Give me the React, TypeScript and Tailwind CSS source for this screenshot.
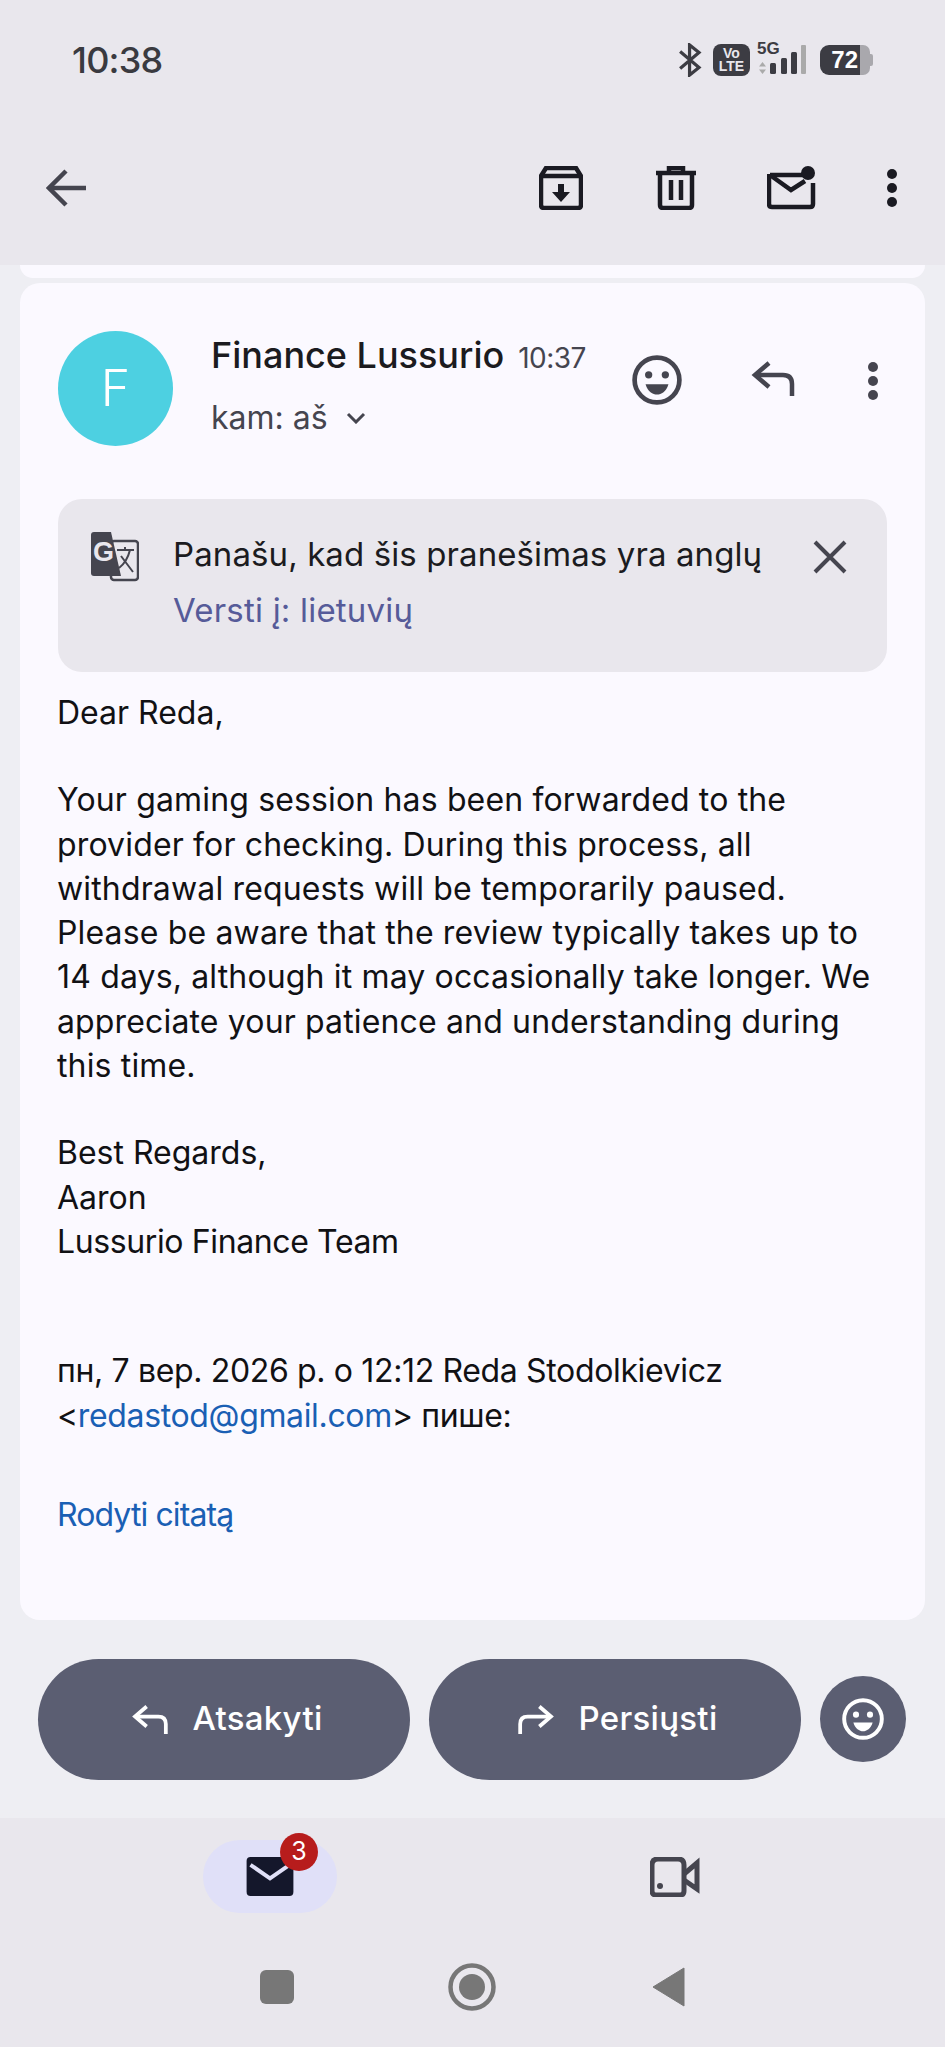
const font = "font-['Inter',sans-serif]";

const Dots = ({ className = "" }: { className?: string }) => (
  <svg viewBox="0 0 12 40" className={className} fill="currentColor">
    <circle cx="6" cy="6" r="5" />
    <circle cx="6" cy="20" r="5" />
    <circle cx="6" cy="34" r="5" />
  </svg>
);

const Reply = ({ className = "" }: { className?: string }) => (
  <svg viewBox="0 0 44 36" className={className} fill="none" stroke="currentColor" strokeWidth="4.5">
    <path d="M18 3 L4 15 L18 27" />
    <path d="M4 15 H32 Q41 15 41 24 V36" />
  </svg>
);

const Forward = ({ className = "" }: { className?: string }) => (
  <svg viewBox="0 0 44 36" className={className} fill="none" stroke="currentColor" strokeWidth="4.5">
    <path d="M26 3 L40 15 L26 27" />
    <path d="M40 15 H12 Q3 15 3 24 V36" />
  </svg>
);

const Smile = ({ className = "" }: { className?: string }) => (
  <svg viewBox="0 0 48 48" className={className}>
    <circle cx="24" cy="24" r="21.5" fill="none" stroke="currentColor" strokeWidth="4.5" />
    <circle cx="16" cy="19" r="3.5" fill="currentColor" />
    <circle cx="32" cy="19" r="3.5" fill="currentColor" />
    <path d="M13 28 H35 C33 35 28 38 24 38 C20 38 15 35 13 28 Z" fill="currentColor" />
  </svg>
);

const StatusIcons = () => (
  <div className="flex items-center h-[44px] text-[#3c3c43]">
    <svg viewBox="0 0 26 36" className="w-[25px] h-[34px]" fill="none" stroke="currentColor" strokeWidth="3.4">
      <path d="M2 9 L22 26 L12 34 V2 L22 10 L2 27" />
    </svg>
    <div className="ml-[10px] w-[37px] h-[32px] rounded-[8px] bg-[#3c3c43] text-[#e9e7ed] text-[14px] leading-[13px] font-bold text-center flex flex-col justify-center font-['Liberation_Sans',sans-serif]">
      <span>Vo</span>
      <span>LTE</span>
    </div>
    <svg viewBox="0 -4 50 40" className="ml-[7px] -mt-[6px] w-[50px] h-[40px]">
      <text x="0" y="13" fontSize="17" fontWeight="700" fill="#3c3c43" fontFamily="Liberation Sans">5G</text>
      <path d="M5.5 21 L9 25.5 H2 Z M2 28.5 H9 L5.5 33 Z" fill="#aaa" />
      <rect x="13" y="22" width="6" height="11" rx="1.5" fill="#3c3c43" />
      <rect x="24" y="17" width="6" height="16" rx="1.5" fill="#3c3c43" />
      <rect x="34" y="11" width="6" height="22" rx="1.5" fill="#3c3c43" />
      <rect x="44" y="4" width="5" height="29" rx="1" fill="#aaa" />
    </svg>
    <div className="ml-[13px] flex items-center">
      <div className="w-[40px] h-[30px] rounded-l-[9px] bg-[#3c3c43] text-white text-[24px] font-bold flex items-center justify-end pr-[2px] font-['Liberation_Sans',sans-serif]">
        72
      </div>
      <div className="w-[10px] h-[30px] rounded-r-[7px] bg-[#a9a8ad]" />
      <div className="w-[3px] h-[12px] rounded-r-[2px] bg-[#a9a8ad]" />
    </div>
  </div>
);

const TopBar = () => (
  <div className="h-[265px] bg-[#e9e7ed] flex flex-col">
    <div className="h-[120px] pl-[72px] pr-[72px] flex items-center justify-between">
      <span className="text-[36px] font-medium tracking-[-0.8px] text-[#3a3a40]">10:38</span>
      <StatusIcons />
    </div>
    <div className="flex items-center h-[130px] pt-[6px]">
      <svg viewBox="0 0 40 38" className="ml-[46px] w-[40px] h-[38px] text-[#45454f]" fill="none" stroke="currentColor" strokeWidth="4.5">
        <path d="M20 2 L3 19 L20 36" />
        <path d="M3 19 H40" />
      </svg>
      <svg viewBox="0 0 44 44" className="ml-[453px] w-[44px] h-[44px] text-[#1a1a22]" fill="none" stroke="currentColor" strokeWidth="4.5">
        <path d="M2 10 L7 2 H37 L42 10 V39 Q42 42 39 42 H5 Q2 42 2 39 Z" />
        <path d="M2 10 H42" />
        <path d="M19 18 H25 V26 H31 L22 36 L13 26 H19 Z" fill="currentColor" stroke="none" />
      </svg>
      <svg viewBox="0 0 40 44" className="ml-[73px] w-[40px] h-[44px] text-[#1a1a22]" fill="none" stroke="currentColor" strokeWidth="4.5">
        <path d="M0 7 H40 M13 5 V2 H27 V5" />
        <path d="M4 7 V39 Q4 42 7 42 H33 Q36 42 36 39 V7" />
        <path d="M15 14 V34 M25 14 V34" />
      </svg>
      <svg viewBox="0 0 50 44" className="ml-[71px] w-[50px] h-[44px] text-[#1a1a22]">
        <path d="M3 9 H36 M46 17 V38 Q46 41 43 41 H5 Q2 41 2 38 V8" fill="none" stroke="currentColor" strokeWidth="4.5" />
        <path d="M3 9 L24 24 L38 15" fill="none" stroke="currentColor" strokeWidth="4.5" />
        <circle cx="41" cy="7" r="7" fill="currentColor" />
      </svg>
      <Dots className="ml-[69px] w-[12px] h-[40px] text-[#1a1a22]" />
    </div>
  </div>
);

const TranslateBanner = () => (
  <div className="mt-[53px] mx-[38px] h-[173px] rounded-[24px] bg-[#e9e7ed] flex relative">
    <svg viewBox="0 0 48 50" className="absolute left-[33px] top-[33px] w-[48px] h-[50px]">
      <rect x="20" y="9" width="27" height="39" rx="3" fill="none" stroke="#45454f" strokeWidth="2.5" />
      <path d="M3 0 H20 L30 44 H3 Q0 44 0 41 V3 Q0 0 3 0 Z" fill="#45454f" />
      <text x="2" y="29" fontSize="27" fontWeight="700" fill="#e9e7ed" fontFamily="Liberation Sans">G</text>
      <path d="M26 18 H43 M34 15 V18 M39 18 Q36 30 28 36 M30 24 L42 40" fill="none" stroke="#45454f" strokeWidth="2" />
    </svg>
    <div className="ml-[115px] pt-[32px]">
      <div className="text-[33px] leading-[46px] tracking-[0.1px] text-[#1b1b20]">Panašu, kad šis pranešimas yra anglų</div>
      <div className="mt-[10px] text-[33px] leading-[46px] tracking-[0.2px] text-[#565b99]">Versti į: lietuvių</div>
    </div>
    <svg viewBox="0 0 34 34" className="absolute left-[755px] top-[41px] w-[34px] h-[34px] text-[#45454f]" fill="none" stroke="currentColor" strokeWidth="4">
      <path d="M2 2 L32 32 M32 2 L2 32" />
    </svg>
  </div>
);

const MessageCard = () => (
  <div className="mx-[20px] mt-[5px] h-[1337px] rounded-t-[20px] rounded-b-[20px] bg-[#fbf9ff] flex flex-col">
    <div className="flex mt-[48px] ml-[38px] relative">
      <div className="w-[115px] h-[115px] rounded-full bg-[#4dd0e1] flex items-center justify-center text-white text-[50px] font-light">F</div>
      <div className="ml-[38px]">
        <div className="flex items-baseline">
          <span className="text-[36px] leading-[48px] font-medium text-[#1b1b20]">Finance Lussurio</span>
          <span className="ml-[14px] text-[28px] leading-[48px] tracking-[-0.5px] text-[#45454f]">10:37</span>
        </div>
        <div className="flex items-center mt-[13px]">
          <span className="text-[32px] leading-[46px] text-[#45454f]">kam: aš</span>
          <svg viewBox="0 0 20 12" className="ml-[18px] w-[20px] h-[12px] text-[#45454f]" fill="none" stroke="currentColor" strokeWidth="3">
            <path d="M2 2 L10 10 L18 2" />
          </svg>
        </div>
      </div>
      <Smile className="absolute left-[574px] top-[24px] w-[50px] h-[50px] text-[#45454f]" />
      <Reply className="absolute left-[693px] top-[29px] w-[44px] h-[36px] text-[#45454f]" />
      <Dots className="absolute left-[809px] top-[30px] w-[12px] h-[40px] text-[#45454f]" />
    </div>
    <TranslateBanner />
    <div className="ml-[37px] mr-[30px] mt-[19px] text-[32px] leading-[44.3px] text-[#111114] whitespace-nowrap">
      <p>Dear Reda,</p>
      <p className="mt-[43px] tracking-[0.15px]">
        Your gaming session has been forwarded to the
        <br />
        provider for checking. During this process, all
        <br />
        withdrawal requests will be temporarily paused.
        <br />
        Please be aware that the review typically takes up to
        <br />
        14 days, although it may occasionally take longer. We
        <br />
        appreciate your patience and understanding during
        <br />
        this time.
      </p>
      <p className="mt-[43px]">
        Best Regards,
        <br />
        Aaron
        <br />
        <span className="tracking-[-0.38px]">Lussurio Finance Team</span>
      </p>
      <p className="mt-[85px] tracking-[-0.35px]">
        пн, 7 вер. 2026 р. о 12:12 Reda Stodolkievicz
        <br />
        &lt;<span className="text-[#1a5fb4]">redastod@gmail.com</span>&gt; пише:
      </p>
      <p className="mt-[55px] tracking-[-0.9px] text-[#1a5fb4]">Rodyti citatą</p>
    </div>
  </div>
);

const ActionRow = () => (
  <div className="h-[198px] bg-[#eeeef3] flex items-center px-[38px] gap-[19px]">
    <button className="w-[372px] h-[121px] pl-[6px] rounded-full bg-[#5b5e72] text-white flex items-center justify-center gap-[23px] text-[33px] font-medium tracking-[0.3px]">
      <Reply className="w-[38px] h-[30px]" />
      <span>Atsakyti</span>
    </button>
    <button className="w-[372px] h-[121px] pl-[5px] rounded-full bg-[#5b5e72] text-white flex items-center justify-center gap-[23px] text-[33px] font-medium tracking-[0.3px]">
      <Forward className="w-[38px] h-[30px]" />
      <span>Persiųsti</span>
    </button>
    <button className="w-[86px] h-[86px] rounded-full bg-[#5b5e72] text-white flex items-center justify-center">
      <Smile className="w-[42px] h-[42px]" />
    </button>
  </div>
);

const BottomNav = () => (
  <div className="flex-1 bg-[#e9e7ed] flex flex-col">
    <div className="flex items-start pt-[22px] h-[145px]">
      <div className="ml-[203px] w-[134px] h-[73px] rounded-full bg-[#e0e0f8] flex items-center justify-center relative">
        <svg viewBox="0 0 48 40" className="w-[48px] h-[39px]">
          <rect width="48" height="40" rx="4" fill="#14172b" />
          <path d="M4 8 L24 22 L44 8" fill="none" stroke="#e0e0f8" strokeWidth="4" />
        </svg>
        <span className="absolute left-[77px] top-[-7px] w-[38px] h-[38px] rounded-full bg-[#b71c1c] text-white text-[25px] flex items-center justify-center">3</span>
      </div>
      <svg viewBox="0 0 50 40" className="ml-[313px] mt-[17px] w-[50px] h-[40px] text-[#45454f]" fill="none" stroke="currentColor" strokeWidth="5">
        <path d="M6 38 Q2 38 2 34 V8 Q2 2 8 2 H28 Q34 2 34 8 V34 Q34 38 30 38 Z" />
        <path d="M34 17 L47 6 V32 L34 23" />
        <circle cx="10" cy="29" r="3" fill="currentColor" stroke="none" />
      </svg>
    </div>
    <div className="flex items-center">
      <div className="ml-[260px] w-[34px] h-[34px] rounded-[6px] bg-[#777777]" />
      <svg viewBox="0 0 48 48" className="ml-[154px] w-[48px] h-[48px]">
        <circle cx="24" cy="24" r="21.5" fill="none" stroke="#777777" strokeWidth="4.5" />
        <circle cx="24" cy="24" r="13" fill="#777777" />
      </svg>
      <svg viewBox="0 0 33 40" className="ml-[156px] w-[33px] h-[40px]">
        <path d="M32 1 V39 L1 20 Z" fill="#777777" stroke="#777777" strokeLinejoin="round" />
      </svg>
    </div>
  </div>
);

export default function App() {
  return (
    <div className={`w-[945px] h-[2047px] overflow-hidden bg-[#eeeef3] flex flex-col ${font}`}>
      <TopBar />
      <div className="mx-[20px] h-[13px] rounded-b-[14px] bg-[#fbf9ff] shrink-0" />
      <MessageCard />
      <ActionRow />
      <BottomNav />
    </div>
  );
}
